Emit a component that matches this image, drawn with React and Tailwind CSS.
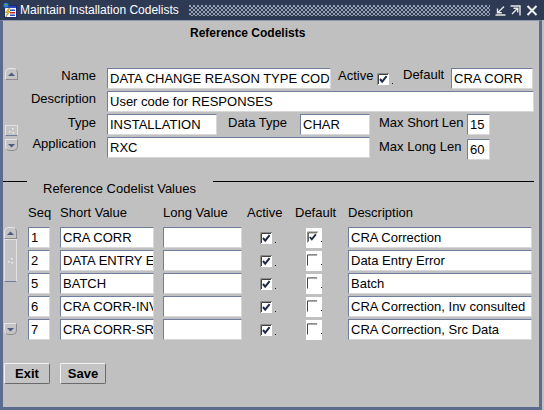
import React from "react";

const rows = [
  { seq: "1", short: "CRA CORR", def: true, desc: "CRA Correction" },
  { seq: "2", short: "DATA ENTRY ERROR", def: false, desc: "Data Entry Error" },
  { seq: "5", short: "BATCH", def: false, desc: "Batch" },
  { seq: "6", short: "CRA CORR-INV", def: false, desc: "CRA Correction, Inv consulted" },
  { seq: "7", short: "CRA CORR-SRC", def: false, desc: "CRA Correction, Src Data" },
];

function Field({ w, value = "", className = "" }) {
  return (
    <div
      className={`h-[21px] ${w} shrink-0 bg-white border border-t-[#6f7e9e] border-l-[#6f7e9e] border-r-[#d8d8d8] border-b-[#d8d8d8] pl-[2px] text-[13px] leading-[19px] whitespace-nowrap overflow-hidden text-black ${className}`}
    >
      {value}
    </div>
  );
}

function Check({ checked }) {
  if (!checked) {
    return (
      <svg width="12" height="12" viewBox="0 0 12 12" className="block">
        <path d="M0.5 12 V0.5 H11" stroke="#2a2a2a" fill="none" />
      </svg>
    );
  }
  return (
    <svg width="12" height="12" viewBox="0 0 12 12" className="block">
      <rect x="0" y="0" width="12" height="12" fill="#fff" />
      <path d="M0.5 12 V0.5 H12" stroke="#8a8a8a" fill="none" />
      <path d="M1.5 11 V1.5 H11" stroke="#404040" fill="none" />
      <path d="M3 6 L5.2 8.6 L9.6 3.2" stroke="#1e2a46" strokeWidth="2" fill="none" />
    </svg>
  );
}

function Dot() {
  return <div className="w-[1px] h-[1px] bg-[#222] ml-[3px] self-end mb-[1px]" />;
}

function ScrollBtn({ up }) {
  return (
    <div
      className={`w-[13px] h-[12px] bg-[#c4c4c4] border border-[#e6e6e6] border-b-[#8c8c8c] border-r-[#8c8c8c] flex items-center justify-center ${
        up ? "rounded-t-[5px]" : "rounded-b-[5px]"
      }`}
    >
      <svg width="7" height="5" viewBox="0 0 7 5">
        <path d={up ? "M0 4 L3.5 0.5 L7 4Z" : "M0 1 L3.5 4.5 L7 1Z"} fill="#4b5b82" />
      </svg>
    </div>
  );
}

function Thumb({ h }) {
  return (
    <div className={`w-[13px] ${h} bg-[#c4c4c4] border border-[#e2e2e2] border-b-[#6f7e9e] flex items-center justify-center`}>
      <svg width="6" height="6" viewBox="0 0 6 6">
        <rect x="3" y="0" width="1.5" height="1.5" fill="#eee" />
        <rect x="0" y="3" width="1.5" height="1.5" fill="#eee" />
        <rect x="3.5" y="4" width="1.5" height="1.5" fill="#eee" />
      </svg>
    </div>
  );
}

function AppIcon() {
  return (
    <svg width="16" height="16" viewBox="0 0 16 16" className="shrink-0">
      <rect x="2.5" y="3.5" width="12" height="12" fill="#fff" stroke="#1c2a6b" />
      <rect x="3" y="4" width="11" height="2" fill="#2c47c8" />
      <rect x="8" y="7.5" width="5" height="1.5" fill="#2c47c8" />
      <rect x="8" y="10" width="5" height="1.5" fill="#d02020" />
      <rect x="8" y="12.5" width="5" height="1.5" fill="#2c47c8" />
      <path d="M6.5 6.5 L3.5 10.5 H5.5 L3.8 15 L8 9.5 H6 L7.8 6.5Z" fill="#f2d21b" stroke="#8a6a00" strokeWidth="0.5" />
      <circle cx="4" cy="3.2" r="2.8" fill="#3a7bd5" stroke="#15306e" strokeWidth="0.5" />
      <path d="M2.2 2.6 q1.6-1.2 3.4 0.4" stroke="#49b548" fill="none" />
    </svg>
  );
}

export default function App() {
  return (
    <div className="w-[544px] h-[410px] bg-[#c0c0c0] flex flex-col text-black font-['Liberation_Sans',Arial,sans-serif] overflow-hidden">
      {/* title bar */}
      <div className="h-[20px] shrink-0 bg-[#2e3a54] flex items-center pl-[2px]">
        <AppIcon />
        <span className="ml-[2px] text-white text-[12px] leading-[16px] whitespace-nowrap">
          Maintain Installation Codelists
        </span>
        <div className="flex-1 ml-[10px] mr-[5px] h-[11px] [background-image:radial-gradient(circle_at_1px_1px,#98a1b5_0.7px,transparent_1px),radial-gradient(circle_at_3px_3px,#98a1b5_0.7px,transparent_1px)] [background-size:4px_4px]" />
        <div className="flex items-center gap-[4px] pr-[6px]">
          <svg width="11" height="11" viewBox="0 0 11 11">
            <path d="M9 1.5 L3 7.5 M2.5 3.5 V7.8 H6.8 M0.5 10 H10.5" stroke="#e8e8e8" strokeWidth="1.4" fill="none" />
          </svg>
          <svg width="11" height="11" viewBox="0 0 11 11">
            <path d="M0.5 1 H10 V10.5 M2 9 L7.5 3.5 M3.5 3.2 H7.8 V7.5" stroke="#e8e8e8" strokeWidth="1.4" fill="none" />
          </svg>
          <svg width="12" height="11" viewBox="0 0 12 11" className="ml-[1px]">
            <path d="M1.5 1 L10.5 10 M10.5 1 L1.5 10" stroke="#f0f0f0" strokeWidth="2" fill="none" />
          </svg>
        </div>
      </div>

      {/* window body */}
      <div className="flex-1 w-[542px] border-l-[3px] border-r-[3px] border-b-[3px] border-[#5b6c8f] border-t border-t-[#8f99ad] flex flex-col">
        <div className="mt-[4px] pl-[187px] text-[12px] font-bold leading-[16px]">Reference Codelists</div>

        {/* master block */}
        <div className="mt-[27px] flex text-[13px]">
          <div className="ml-[2px] w-[13px] flex flex-col">
            <ScrollBtn up />
            <div className="h-[45px]" />
            <Thumb h="h-[11px]" />
            <div className="h-[3px]" />
            <ScrollBtn />
          </div>

          <div className="flex flex-col">
            <div className="flex h-[23px] items-start">
              <span className="w-[78px] text-right leading-[16px]">Name</span>
              <Field w="w-[224px]" className="ml-[11px]" value="DATA CHANGE REASON TYPE CODE" />
              <span className="ml-[7px] w-[39px] leading-[16px]">Active</span>
              <div className="mt-[5px] flex h-[12px]">
                <Check checked />
                <Dot />
              </div>
              <span className="ml-[10px] w-[48px] leading-[13px]">Default</span>
              <Field w="w-[82px]" value="CRA CORR" />
            </div>
            <div className="flex h-[23px] items-start">
              <span className="w-[78px] text-right leading-[16px]">Description</span>
              <Field w="w-[427px]" className="ml-[11px]" value="User code for RESPONSES" />
            </div>
            <div className="flex h-[23px] items-start">
              <span className="w-[78px] text-right leading-[17px]">Type</span>
              <Field w="w-[110px]" className="ml-[11px]" value="INSTALLATION" />
              <span className="ml-[11px] w-[72px] leading-[17px]">Data Type</span>
              <Field w="w-[70px]" value="CHAR" />
              <span className="ml-[9px] w-[88px] leading-[17px]">Max Short Len</span>
              <Field w="w-[23px]" value="15" />
            </div>
            <div className="flex h-[23px] items-start">
              <span className="w-[78px] text-right leading-[14px]">Application</span>
              <Field w="w-[263px]" className="ml-[11px]" value="RXC" />
              <span className="ml-[9px] w-[88px] leading-[20px]">Max Long Len</span>
              <Field w="w-[23px]" className="mt-[2px]" value="60" />
            </div>
          </div>
        </div>

        {/* detail frame title */}
        <div className="mt-[21px] h-[17px] flex items-start text-[13px]">
          <div className="w-[24px] h-[1px] bg-black" />
          <span className="ml-[16px] leading-[16px]">Reference Codelist Values</span>
          <div className="flex-1 ml-[17px] mr-[5px] h-[1px] bg-black" />
        </div>

        {/* column headers */}
        <div className="mt-[7px] pl-[25px] flex text-[13px] leading-[16px]">
          <span className="w-[32px]">Seq</span>
          <span className="w-[103px]">Short Value</span>
          <span className="w-[79px]">Long Value</span>
          <span className="w-[53px] pl-[5px]">Active</span>
          <span className="w-[53px]">Default</span>
          <span>Description</span>
        </div>

        {/* detail rows */}
        <div className="mt-[6px] flex">
          <div className="ml-[1px] w-[13px] flex flex-col">
            <ScrollBtn up />
            <Thumb h="h-[43px]" />
            <div className="h-[41px]" />
            <ScrollBtn />
          </div>
          <div className="ml-[11px] flex flex-col gap-[2px]">
            {rows.map((r) => (
              <div key={r.seq} className="flex h-[21px]">
                <Field w="w-[22px]" value={r.seq} />
                <Field w="w-[94px]" className="ml-[10px]" value={r.short} />
                <Field w="w-[79px]" className="ml-[9px]" />
                <div className="w-[53px] pl-[18px] flex items-center">
                  <div className="flex h-[12px]">
                    <Check checked />
                    <Dot />
                  </div>
                </div>
                <div className="w-[53px] pl-[11px]">
                  <div className="mt-[1px] w-[16px] h-[20px] bg-white pl-[1px] pt-[3px]">
                    <div className="flex h-[12px]">
                      <Check checked={r.def} />
                      <Dot />
                    </div>
                  </div>
                </div>
                <Field w="w-[184px]" value={r.desc} />
              </div>
            ))}
          </div>
        </div>

        {/* buttons */}
        <div className="mt-[23px] flex">
          <button className="ml-[1px] w-[46px] h-[21px] bg-[#c4c4c4] border border-[#f2f2f2] border-r-[#6a6a6a] border-b-[#6a6a6a] rounded-[2px] text-[13px] font-bold leading-[19px] text-center">
            Exit
          </button>
          <button className="ml-[10px] w-[46px] h-[21px] bg-[#c4c4c4] border border-[#f2f2f2] border-r-[#6a6a6a] border-b-[#6a6a6a] rounded-[2px] text-[13px] font-bold leading-[19px] text-center">
            Save
          </button>
        </div>
      </div>
    </div>
  );
}
